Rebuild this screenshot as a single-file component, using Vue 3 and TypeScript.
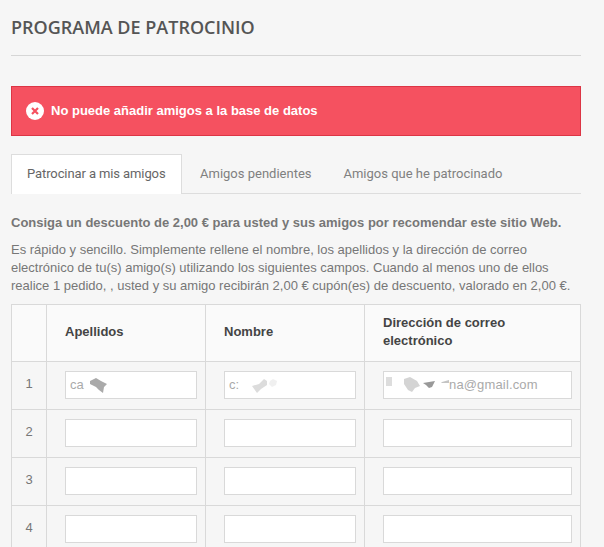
<script setup lang="ts">
const tabs: string[] = ['Patrocinar a mis amigos', 'Amigos pendientes', 'Amigos que he patrocinado']
const rows: { n: number; a: string; b: string; c: string }[] = [
  { n: 1, a: 'ca', b: 'c:', c: 'na@gmail.com' },
  { n: 2, a: '', b: '', c: '' },
  { n: 3, a: '', b: '', c: '' },
  { n: 4, a: '', b: '', c: '' },
]
</script>

<template>
  <main class="page">
    <h1 class="title">PROGRAMA DE PATROCINIO</h1>
    <div class="alert">
      <svg class="alert-icon" width="18" height="18" viewBox="0 0 18 18">
        <circle cx="9" cy="9" r="9" fill="#fff" />
        <path d="M6 6l6 6M12 6l-6 6" stroke="#f55160" stroke-width="2.2" fill="none" />
      </svg>
      <span>No puede añadir amigos a la base de datos</span>
    </div>
    <nav class="tabs">
      <a v-for="(t, i) in tabs" :key="t" class="tab" :class="{ active: i === 0 }">{{ t }}</a>
    </nav>
    <p class="lead">Consiga un descuento de 2,00 € para usted y sus amigos por recomendar este sitio Web.</p>
    <p class="desc">Es rápido y sencillo. Simplemente rellene el nombre, los apellidos y la dirección de correo electrónico de tu(s) amigo(s) utilizando los siguientes campos. Cuando al menos uno de ellos realice 1 pedido, , usted y su amigo recibirán 2,00 € cupón(es) de descuento, valorado en 2,00 €.</p>
    <div class="table">
      <div class="row head">
        <div class="cell c0"></div>
        <div class="cell c1">Apellidos</div>
        <div class="cell c2">Nombre</div>
        <div class="cell c3"><span class="wrap">Dirección de correo electrónico</span></div>
      </div>
      <div v-for="r in rows" :key="r.n" class="row body">
        <div class="cell c0">{{ r.n }}</div>
        <div class="cell c1">
          <div class="input">
            {{ r.a }}
            <svg v-if="r.n === 1" class="smudge s1" width="20" height="16" viewBox="0 0 20 16">
              <path d="M1 3l6-3 5 3 6 3-3 3-1 6-4-3-3-3-6-3z" fill="#aaa" />
            </svg>
          </div>
        </div>
        <div class="cell c2">
          <div class="input">
            {{ r.b }}
            <svg v-if="r.n === 1" class="smudge s2" width="28" height="16" viewBox="0 0 28 16">
              <path d="M1 8l7-2 5-5 3 2 0 4-6 4-4 4z" fill="#dcdcdc" />
              <path d="M19 3l3-2 4 2-1 4-4 2-3-3z" fill="#f0f0f0" />
            </svg>
          </div>
        </div>
        <div class="cell c3">
          <div class="input email">
            {{ r.c }}
            <svg v-if="r.n === 1" class="smudge s3" width="68" height="18" viewBox="0 0 68 18">
              <path d="M1 1h6v9H1z" fill="#dddddd" />
              <path d="M19 3l6-2 7 4 3 5-5 2-3 4-4-2-4-6z" fill="#d4d4d4" />
              <path d="M38 7l12-2-3 6-3 1-3-3z" fill="#999" />
              <path d="M57 6l7-2v3h-8z" fill="#c4c4c4" />
            </svg>
          </div>
        </div>
      </div>
    </div>
  </main>
</template>

<style>
html, body { margin: 0; background: #f6f6f6; height: 100%; overflow: hidden; }
</style>

<style scoped>
.page {
  box-sizing: border-box;
  width: 604px;
  height: 547px;
  overflow: hidden;
  padding: 0 23px 0 11px;
  background: #f6f6f6;
  font-family: "Liberation Sans", Arial, sans-serif;
  font-size: 13px;
  line-height: 18px;
  color: #777;
}
.title {
  margin: 0;
  height: 55px;
  border-bottom: 1px solid #d6d6d6;
  font-family: "Open Sans", sans-serif;
  font-size: 18px;
  font-weight: 600;
  line-height: 55px;
  color: #555;
}
.alert {
  display: flex;
  align-items: center;
  gap: 7px;
  box-sizing: border-box;
  height: 50px;
  margin-top: 30px;
  padding-left: 14px;
  background: #f55160;
  border: 1px solid #dc3545;
  color: #fff;
  font-weight: 700;
  font-size: 13px;
}
.tabs {
  display: flex;
  height: 40px;
  box-sizing: border-box;
  margin-top: 18px;
  border-bottom: 1px solid #ddd;
}
.tab {
  box-sizing: border-box;
  height: 40px;
  padding: 10px 17px 0;
  font-family: Roboto, sans-serif;
  color: #808080;
  border: 1px solid transparent;
  border-bottom: 0;
}
.tab.active {
  width: 171px;
  padding-left: 15px;
  padding-right: 0;
  background: #fff;
  border-color: #ddd;
  color: #666;
  letter-spacing: -0.1px;
}
.tab:nth-child(3) { padding-left: 13px; }
.lead {
  margin: 20px 0 0;
  font-weight: 700;
  color: #777;
}
.desc {
  margin: 9px 0 0;
  color: #777;
}
.table {
  margin-top: 9px;
  border: 1px solid #d9d9d9;
  border-bottom: 0;
  width: 570px;
  box-sizing: border-box;
}
.row {
  display: grid;
  grid-template-columns: 34px 159px 159px 1fr;
  border-bottom: 1px solid #d9d9d9;
}
.row.head {
  height: 57px;
  box-sizing: border-box;
  background: #fafafa;
  font-weight: 700;
  color: #444;
}
.row.head .cell { padding-bottom: 2px; }
.row.body {
  height: 48px;
  box-sizing: border-box;
}
.cell {
  display: flex;
  align-items: center;
  box-sizing: border-box;
  padding: 0 8px 1px 18px;
  border-left: 1px solid #d9d9d9;
}
.row.body .cell.c0 {
  border-left: 0;
  padding: 0 0 3px;
  justify-content: center;
  color: #777;
}
.row.head .cell.c0 { border-left: 0; }
.wrap { max-width: 150px; }
.input {
  position: relative;
  box-sizing: border-box;
  width: 100%;
  height: 28px;
  padding: 0 4px;
  background: #fff;
  border: 1px solid #d9d9d9;
  font-size: 13px;
  line-height: 26px;
  color: #aaa;
  white-space: nowrap;
}
.input.email { padding-left: 65px; letter-spacing: 0.15px; }
.smudge { position: absolute; }
.s1 { left: 23px; top: 6px; }
.s2 { left: 26px; top: 6px; }
.s3 { left: 1px; top: 4px; }
</style>
